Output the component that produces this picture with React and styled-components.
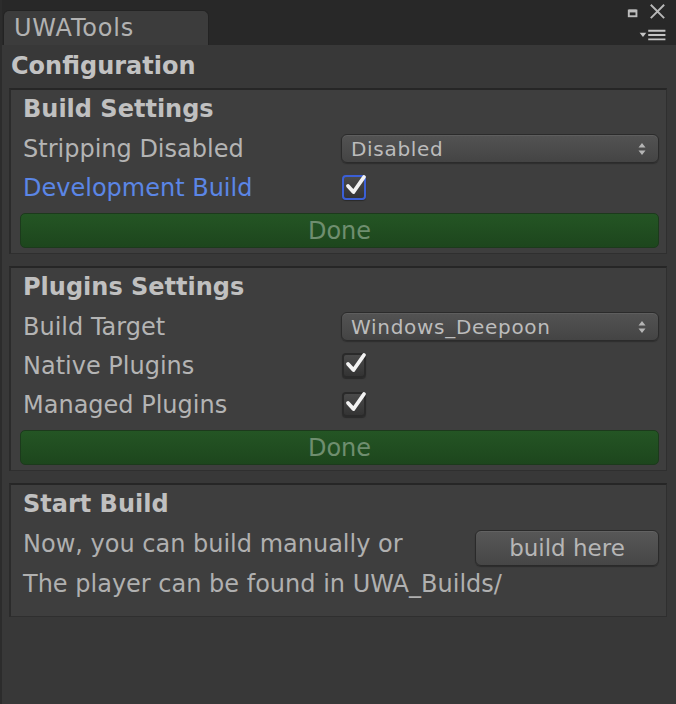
import React from 'react'
import styled, { createGlobalStyle } from 'styled-components'

const GlobalStyle = createGlobalStyle`
    html, body {
        margin: 0;
        padding: 0;
        background: #383838;
    }
    body {
        font-family: "DejaVu Sans", Verdana, sans-serif;
    }
`

export const Window = styled.div`
    width: 676px;
    height: 704px;
    background: #383838;
    border-left: 2px solid #2c2c2c;
    box-sizing: border-box;
    display: flex;
    flex-direction: column;
`

export const TopBar = styled.div`
    height: 45px;
    background: #282828;
    display: flex;
    align-items: flex-end;
    padding-left: 1px;
    flex-shrink: 0;
`

export const Tab = styled.div`
    width: 206px;
    height: 35px;
    background: #3c3c3c;
    border: 1px solid #232323;
    border-bottom: none;
    border-radius: 6px 6px 0 0;
    box-sizing: border-box;
    color: #b2b2b2;
    font-size: 24px;
    letter-spacing: 0.8px;
    line-height: 35px;
    padding-left: 10px;
`

export const Controls = styled.div`
    margin-left: auto;
    width: 56px;
    height: 45px;
    display: flex;
    flex-direction: column;
    align-items: flex-end;
    padding-right: 8px;
`

export const Content = styled.div`
    padding: 0 9px 0 7px;
    display: flex;
    flex-direction: column;
`

export const Title = styled.div`
    height: 43px;
    line-height: 42px;
    font-size: 24px;
    font-weight: bold;
    color: #c2c2c2;
    padding-left: 2px;
`

export const Box = styled.section`
    background: #3e3e3e;
    border: 1px solid #2f2f2f;
    border-top: 2px solid #262626;
    border-left: 2px solid #2b2b2b;
    padding: 0 7px ${(p) => p.$bottom || 5}px 9px;
    margin-bottom: ${(p) => p.$gap || 0}px;
`

export const Row = styled.div`
    height: 39px;
    display: grid;
    grid-template-columns: 321px 1fr;
    align-items: center;
`

export const Heading = styled.div`
    height: 39px;
    line-height: 39px;
    font-size: 24px;
    font-weight: bold;
    color: #c0c0c0;
    padding-left: 3px;
`

export const Label = styled.span`
    font-size: 24px;
    color: ${(p) => (p.$active ? '#5b86e6' : '#b4b4b4')};
    padding-left: 3px;
    white-space: nowrap;
`

export const Dropdown = styled.div`
    height: 29px;
    border-radius: 6px;
    border: 1px solid #2b2b2b;
    background: linear-gradient(#535353, #444444);
    box-shadow: inset 0 1px 0 #5e5e5e, 0 1px 1px #2e2e2e;
    box-sizing: border-box;
    display: flex;
    align-items: center;
    padding: 0 12px 0 9px;
    color: #bcbcbc;
    font-size: 20px;
    letter-spacing: 0.7px;
`

export const Arrows = styled.svg`
    margin-left: auto;
    width: 8px;
    height: 14px;
`

export const Check = styled.div`
    width: 24px;
    height: 25px;
    margin-left: 1px;
    border-radius: 4px;
    box-sizing: border-box;
    border: 2px solid ${(p) => (p.$focus ? '#3b5fd6' : '#2a2a2a')};
    background: linear-gradient(#4a4a4a, #333333);
    box-shadow: 0 1px 1px #2a2a2a;
    position: relative;
`

export const DoneButton = styled.div`
    margin-top: 6px;
    height: 35px;
    border-radius: 5px;
    background: linear-gradient(#245524, #1d461d);
    border: 1px solid #1c3a1c;
    box-sizing: border-box;
    display: flex;
    align-items: center;
    justify-content: center;
    color: #6f8e6f;
    font-size: 24px;
`

export const TextRow = styled.div`
    height: 40px;
    display: flex;
    align-items: center;
    font-size: 24px;
    color: #b0b0b0;
    padding-left: 3px;
    white-space: nowrap;
`

export const PlainButton = styled.div`
    margin-left: auto;
    width: 184px;
    height: 36px;
    margin-top: 8px;
    border-radius: 6px;
    border: 1px solid #2a2a2a;
    background: linear-gradient(#575757, #464646);
    box-shadow: inset 0 1px 0 #626262, 0 1px 1px #2c2c2c;
    box-sizing: border-box;
    display: flex;
    align-items: center;
    justify-content: center;
    color: #b6b6b6;
    font-size: 23px;
`

const Tick = () => (
    <svg width="22" height="22" viewBox="0 0 22 22" style={{ position: 'absolute', left: 1, top: -3 }}>
        <path d="M3 12 L8.5 18 L19 3" fill="none" stroke="#f2f2f2" strokeWidth="3.8" strokeLinejoin="round" strokeLinecap="round" />
    </svg>
)

const Select = ({ value }) => (
    <Dropdown>
        {value}
        <Arrows viewBox="0 0 8 14">
            <path d="M4 1 L7.5 5.5 L0.5 5.5 Z M4 13 L7.5 8.5 L0.5 8.5 Z" fill="#b5b5b5" />
        </Arrows>
    </Dropdown>
)

const WindowIcons = () => (
    <Controls>
        <svg width="44" height="24" viewBox="0 0 44 24">
            <rect x="4" y="11" width="8" height="6" fill="none" stroke="#bdbdbd" strokeWidth="2" />
            <rect x="4" y="10" width="8" height="3" fill="#bdbdbd" />
            <path d="M27 5 L41 19 M41 5 L27 19" stroke="#b8b8b8" strokeWidth="2" />
        </svg>
        <svg width="30" height="21" viewBox="0 0 30 21" style={{ marginTop: 2 }}>
            <path d="M1 8 L8 8 L4.5 12.5 Z" fill="#c4c4c4" />
            <path d="M10 6 H28 M10 10.5 H28 M10 15 H28" stroke="#c4c4c4" strokeWidth="2" />
        </svg>
    </Controls>
)

export default function App() {
    return (
        <>
            <GlobalStyle />
            <Window>
                <TopBar>
                    <Tab>UWATools</Tab>
                    <WindowIcons />
                </TopBar>
                <Content>
                    <Title>Configuration</Title>

                    <Box $gap={12}>
                        <Heading>Build Settings</Heading>
                        <Row>
                            <Label>Stripping Disabled</Label>
                            <Select value="Disabled" />
                        </Row>
                        <Row>
                            <Label $active>Development Build</Label>
                            <Check $focus><Tick /></Check>
                        </Row>
                        <DoneButton>Done</DoneButton>
                    </Box>

                    <Box $gap={12}>
                        <Heading>Plugins Settings</Heading>
                        <Row>
                            <Label>Build Target</Label>
                            <Select value="Windows_Deepoon" />
                        </Row>
                        <Row>
                            <Label>Native Plugins</Label>
                            <Check><Tick /></Check>
                        </Row>
                        <Row>
                            <Label>Managed Plugins</Label>
                            <Check><Tick /></Check>
                        </Row>
                        <DoneButton>Done</DoneButton>
                    </Box>

                    <Box $bottom={12}>
                        <Heading>Start Build</Heading>
                        <TextRow>
                            Now, you can build manually or
                            <PlainButton>build here</PlainButton>
                        </TextRow>
                        <TextRow>The player can be found in UWA_Builds/</TextRow>
                    </Box>
                </Content>
            </Window>
        </>
    )
}
